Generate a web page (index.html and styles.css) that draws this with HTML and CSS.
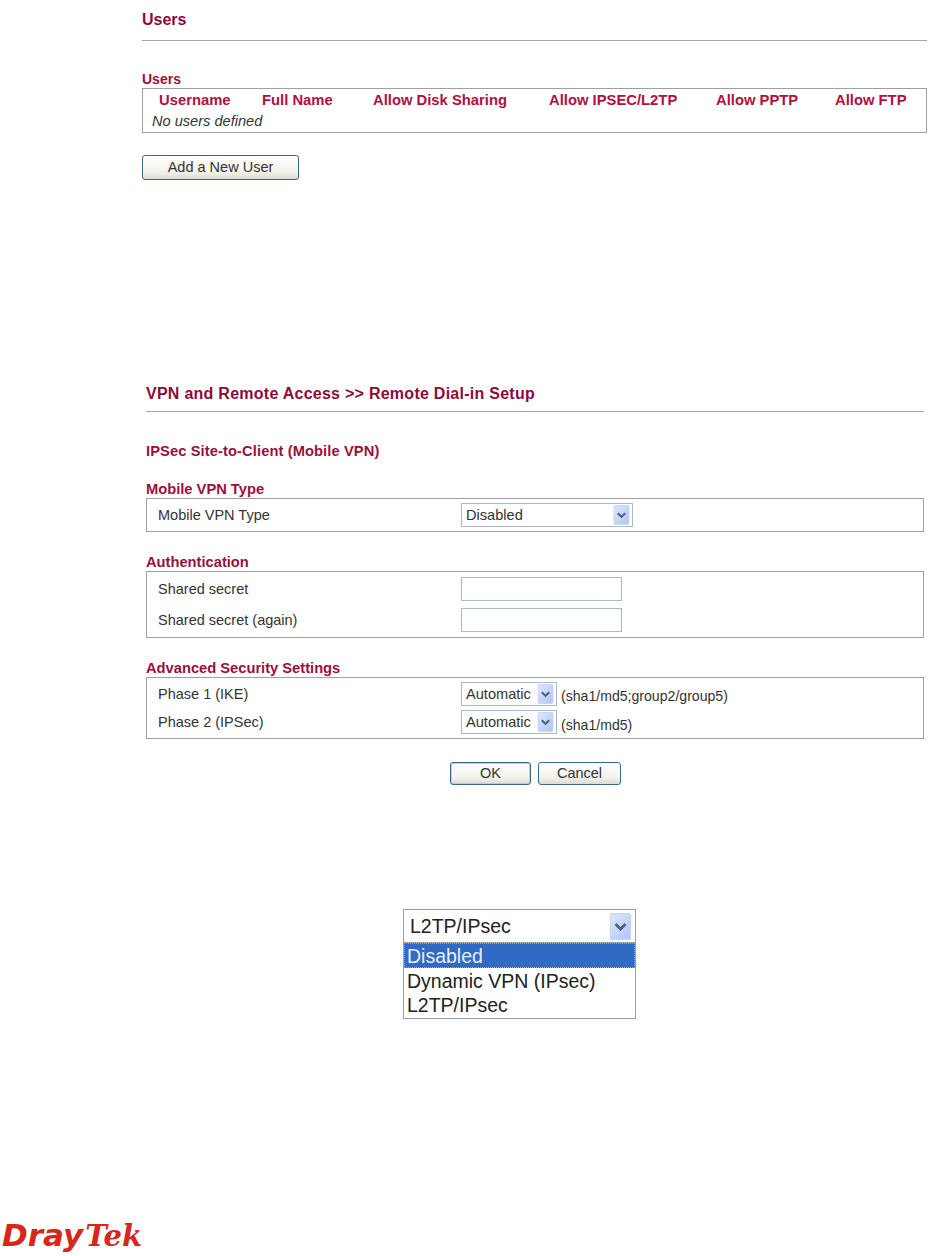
FILE: index.html
```html
<!DOCTYPE html>
<html lang="en">
<head>
<meta charset="utf-8">
<title>VPN and Remote Access</title>
<link rel="stylesheet" href="styles.css">
</head>
<body>
<section class="users">
  <h1 class="title">Users</h1>
  <h2 class="label users-label">Users</h2>
  <div class="users-box">
    <div class="users-head">
      <span class="c1">Username</span>
      <span class="c2">Full Name</span>
      <span class="c3">Allow Disk Sharing</span>
      <span class="c4">Allow IPSEC/L2TP</span>
      <span class="c5">Allow PPTP</span>
      <span class="c6">Allow FTP</span>
    </div>
    <div class="users-empty">No users defined</div>
  </div>
  <button class="btn add-btn" type="button">Add a New User</button>
</section>

<section class="vpn">
  <h1 class="title vpn-title">VPN and Remote Access &gt;&gt; Remote Dial-in Setup</h1>
  <h2 class="label ipsec-label">IPSec Site-to-Client (Mobile VPN)</h2>

  <h2 class="label group-label">Mobile VPN Type</h2>
  <div class="box box-type">
    <div class="row"><span class="name">Mobile VPN Type</span>
      <span class="sel sel-wide"><span class="sel-text">Disabled</span><svg class="arrow" viewBox="0 0 17 21"><use href="#arrow"/></svg></span>
    </div>
  </div>

  <h2 class="label group-label auth-label">Authentication</h2>
  <div class="box box-auth">
    <div class="row"><span class="name">Shared secret</span><input class="field" type="text" aria-label="Shared secret"></div>
    <div class="row"><span class="name">Shared secret (again)</span><input class="field" type="text" aria-label="Shared secret again"></div>
  </div>

  <h2 class="label group-label adv-label">Advanced Security Settings</h2>
  <div class="box box-adv">
    <div class="row"><span class="name">Phase 1 (IKE)</span>
      <span class="sel sel-auto"><span class="sel-text">Automatic</span><svg class="arrow" viewBox="0 0 17 21"><use href="#arrow"/></svg></span>
      <span class="hint">(sha1/md5;group2/group5)</span>
    </div>
    <div class="row"><span class="name">Phase 2 (IPSec)</span>
      <span class="sel sel-auto"><span class="sel-text">Automatic</span><svg class="arrow" viewBox="0 0 17 21"><use href="#arrow"/></svg></span>
      <span class="hint hint-low">(sha1/md5)</span>
    </div>
  </div>

  <div class="actions">
    <button class="btn ok-btn" type="button">OK</button>
    <button class="btn cancel-btn" type="button">Cancel</button>
  </div>
</section>

<div class="drop">
  <div class="drop-head"><span>L2TP/IPsec</span><svg class="arrow arrow-big" viewBox="0 0 17 21"><use href="#arrow"/></svg></div>
  <ul class="drop-list">
    <li class="active">Disabled</li>
    <li>Dynamic VPN (IPsec)</li>
    <li>L2TP/IPsec</li>
  </ul>
</div>

<footer class="logo"><span class="logo-dray">Dray</span><span class="logo-tek">Tek</span></footer>

<svg class="defs" width="0" height="0" aria-hidden="true">
  <defs>
    <linearGradient id="arrowBg" x1="0" y1="0" x2="1" y2="1">
      <stop offset="0" stop-color="#dfe8fd"/>
      <stop offset="1" stop-color="#aec4f5"/>
    </linearGradient>
    <symbol id="arrow" viewBox="0 0 17 21">
      <rect x="0.5" y="0.5" width="16" height="20" rx="1.5" fill="url(#arrowBg)" stroke="#c6d4f5"/>
      <path d="M4.6 8.6 L8.5 12.4 L12.4 8.6" fill="none" stroke="#4d6185" stroke-width="2.2"/>
    </symbol>
  </defs>
</svg>
</body>
</html>
```
FILE: styles.css
```css
* { box-sizing: border-box; }
html, body { margin: 0; padding: 0; background: #fff; }
body {
  width: 947px;
  height: 1256px;
  overflow: hidden;
  font-family: "Liberation Sans", Arial, sans-serif;
  color: #222;
  font-size: 14px;
}
h1, h2 { margin: 0; }

.title {
  font-size: 16px;
  line-height: 16px;
  font-weight: 700;
  color: #8f0a37;
  border-bottom: 1px solid #a8a8a8;
}
.label {
  font-size: 14.7px;
  line-height: 15px;
  font-weight: 700;
  color: #9b0f3e;
}

.users { margin-left: 142px; width: 785px; padding-top: 12px; height: 386px; }
.users .title { height: 29px; }
.users-label { margin-top: 31px; height: 15px; font-size: 14px; }
.users-box {
  height: 45px;
  margin-top: 1px;
  border: 1px solid #a0a0a0;
  padding-top: 1px;
}
.users-head {
  display: grid;
  grid-template-columns: 103px 111px 176px 167px 119px auto;
  padding-left: 16px;
  font-size: 14.8px;
  line-height: 21px;
  font-weight: 700;
  color: #b0103f;
  white-space: nowrap;
}
.users-empty { padding-left: 9px; font-style: italic; font-size: 14.6px; line-height: 21px; color: #333; }
.add-btn { display: block; margin-top: 22px; width: 157px; height: 25px; }

.btn {
  padding: 0 0 2px;
  font-family: inherit;
  font-size: 14.5px;
  color: #333;
  border: 1px solid #3d668c;
  border-radius: 3px;
  background: linear-gradient(#ffffff, #f3f2ea 70%, #dedbcf);
}

.vpn { margin-left: 146px; width: 778px; }
.vpn-title { height: 26px; letter-spacing: .26px; }
.ipsec-label { margin-top: 32px; height: 15px; letter-spacing: .1px; }
.group-label { margin-top: 23px; height: 15px; }
.auth-label { margin-top: 23px; }
.adv-label { margin-top: 23px; }

.box { border: 1px solid #a0a0a0; padding: 0 10px; width: 778px; }
.box-type { height: 34px; padding-top: 4px; margin-top: 1px; }
.box-auth { height: 67px; padding-top: 5px; margin-top: 1px; display: flex; flex-direction: column; gap: 7px; }
.box-adv { height: 62px; padding-top: 4px; margin-top: 1px; display: flex; flex-direction: column; gap: 4px; }

.row { display: flex; align-items: center; height: 24px; }
.name { width: 304px; padding-left: 1px; font-size: 14.5px; color: #333; flex: none; }
.sel {
  display: inline-flex;
  align-items: center;
  justify-content: space-between;
  height: 24px;
  padding: 0 2px 0 4px;
  border: 1px solid #a6b9cf;
  background: #fff;
  font-size: 14.6px;
  color: #333;
}
.sel-wide { width: 172px; }
.sel-auto { width: 96px; }
.arrow { display: block; width: 17px; height: 20px; flex: none; }
.hint { margin-left: 4px; font-size: 14.1px; color: #333; padding-top: 3px; }
.hint-low { padding-top: 6px; }
.field { width: 161px; height: 24px; padding: 0; border: 1px solid #a6b9cf; background: #fff; }

.actions { display: flex; gap: 7px; margin-top: 23px; padding-left: 304px; }
.ok-btn { width: 81px; height: 23px; box-shadow: inset 0 0 0 1px #b9cdf0; }
.cancel-btn { width: 83px; height: 23px; }

.drop {
  margin: 124px 0 0 403px;
  width: 233px;
  height: 110px;
  border: 1px solid #8aa3b8;
  font-size: 19.5px;
  color: #222;
}
.drop-head {
  height: 32px;
  display: flex;
  align-items: center;
  justify-content: space-between;
  padding: 0 3px 0 6px;
}
.arrow-big { width: 23px; height: 27px; }
.drop-list { list-style: none; margin: 0; padding: 0; border-top: 1px solid #8aa3b8; }
.drop-list li { height: 24px; line-height: 26px; padding-left: 3px; }
.drop-list .active {
  height: 25px;
  background: #316ac5;
  color: #e8eefc;
  outline: 1px dotted #d9a040;
  outline-offset: -1px;
}

.logo {
  margin: 199px 0 0 2px;
  height: 34px;
  line-height: 34px;
  color: #d8261c;
  white-space: nowrap;
}
.logo-dray { font-family: "DejaVu Sans", sans-serif; font-weight: 700; font-style: italic; font-size: 31px; }
.logo-tek { font-family: "DejaVu Serif", serif; font-weight: 700; font-style: italic; font-size: 29px; margin-left: 2px; }
.defs { position: absolute; }
```
